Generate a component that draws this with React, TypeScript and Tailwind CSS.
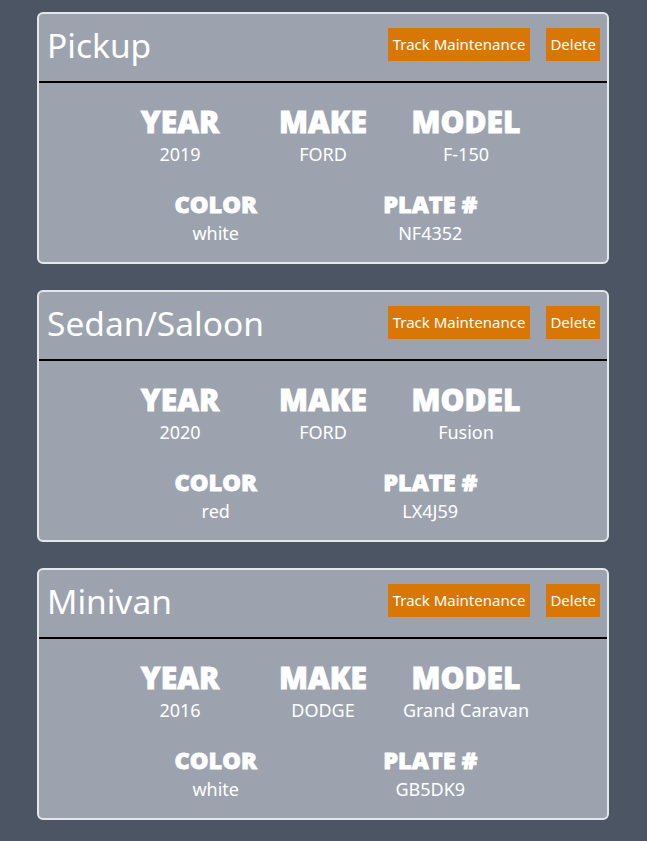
import React from "react";

type Car = { type: string; year: string; make: string; model: string; color: string; plate: string };

const cars: Car[] = [
  { type: "Pickup", year: "2019", make: "FORD", model: "F-150", color: "white", plate: "NF4352" },
  { type: "Sedan/Saloon", year: "2020", make: "FORD", model: "Fusion", color: "red", plate: "LX4J59" },
  { type: "Minivan", year: "2016", make: "DODGE", model: "Grand Caravan", color: "white", plate: "GB5DK9" },
];

const body = { fontFamily: '"Noto Sans", "Open Sans", sans-serif' };
const heavy = { fontFamily: '"Open Sans", "Noto Sans", sans-serif' };

function Field({ label, value, big }: { label: string; value: string; big?: boolean }) {
  return (
    <div className="flex-1 flex flex-col items-center">
      <div
        className={`${big ? "text-[30px] leading-[36px]" : "text-[23.5px] leading-[30px]"} font-extrabold text-white [-webkit-text-stroke:0.8px_white]`}
        style={heavy}
      >
        {label}
      </div>
      <div className="text-[18px] leading-[28px] text-white" style={body}>
        {value}
      </div>
    </div>
  );
}

function Card({ car }: { car: Car }) {
  return (
    <div className="border-2 border-gray-200 rounded-md bg-[#9ca3af] mb-[26px]">
      <div className="flex items-start justify-between pl-[8px] pr-[7px] pt-[14px] h-[69px] border-b-2 border-black">
        <div className="text-[33.5px] leading-[34px] text-white" style={body}>
          {car.type}
        </div>
        <div className="flex gap-[16px]">
          <button className="bg-[#d97706] text-white text-[15px] h-[33px] px-[5px]" style={body}>
            Track Maintenance
          </button>
          <button className="bg-[#d97706] text-white text-[15px] h-[33px] px-[4px]" style={body}>
            Delete
          </button>
        </div>
      </div>
      <div className="w-[429px] mx-auto pt-[21px] pb-[15px]">
        <div className="flex">
          <Field label="YEAR" value={car.year} big />
          <Field label="MAKE" value={car.make} big />
          <Field label="MODEL" value={car.model} big />
        </div>
        <div className="flex mt-[21px]">
          <Field label="COLOR" value={car.color} />
          <Field label="PLATE #" value={car.plate} />
        </div>
      </div>
    </div>
  );
}

export default function App() {
  return (
    <div className="min-h-screen bg-[#4b5563] pl-[37px] pr-[38px] pt-[12px] pb-[1px]">
      {cars.map((c) => (
        <Card key={c.type} car={c} />
      ))}
    </div>
  );
}
